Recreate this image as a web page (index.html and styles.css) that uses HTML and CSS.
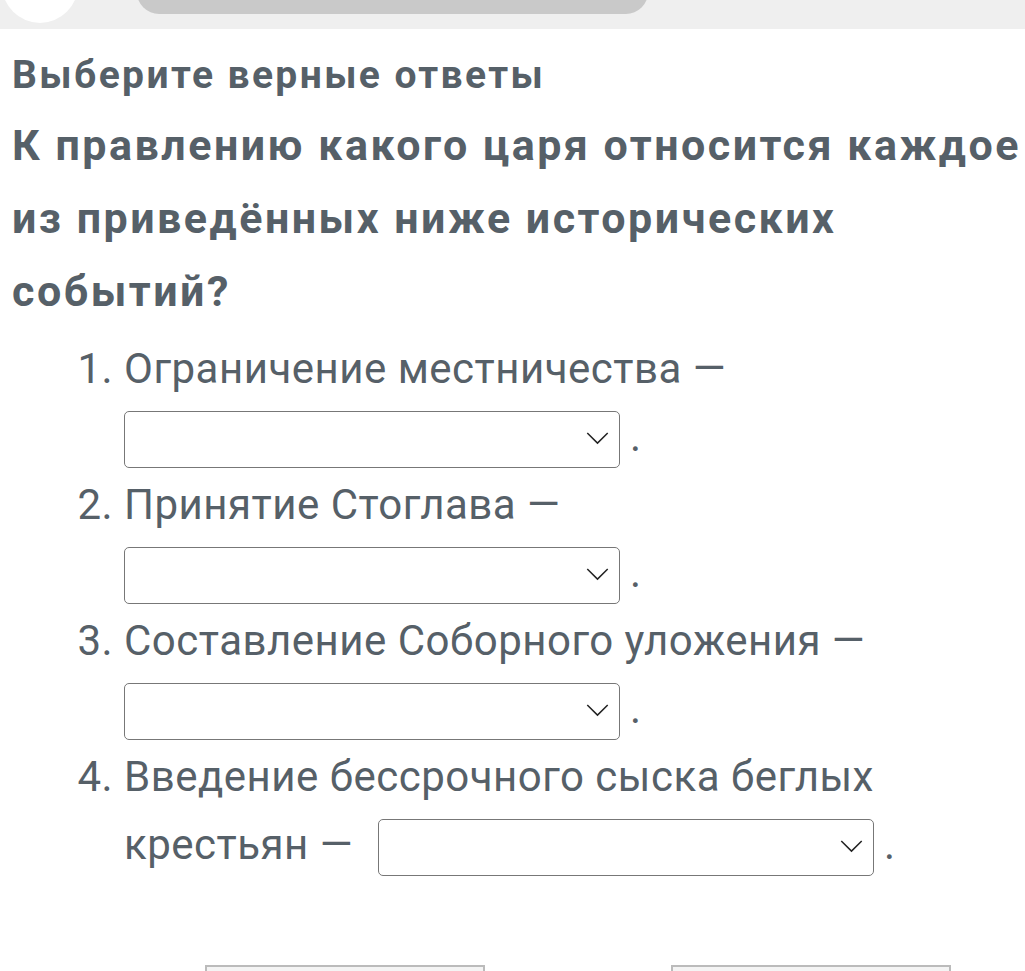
FILE: index.html
```html
<!DOCTYPE html>
<html lang="ru">
  <head>
    <meta charset="UTF-8" />
    <title>Выберите верные ответы</title>
    <link rel="stylesheet" href="styles.css">
  </head>

  <body>
    <!-- Верхняя панель -->
    <div class="topbar">
      <div class="avatar"></div>
      <div class="search"></div>
    </div>

    <div class="task">
      <h2 class="task-title">Выберите верные ответы</h2>
      <p class="question">К правлению какого царя относится каждое из приведённых ниже исторических событий?</p>

      <ol class="answers">
        <li>
          <span class="event">Ограничение местничества —</span>
          <span class="pick"><select></select><svg viewBox="0 0 24 14"><path d="M1 1 L12 12 L23 1" /></svg></span>.
        </li>
        <li>
          <span class="event">Принятие Стоглава —</span>
          <span class="pick"><select></select><svg viewBox="0 0 24 14"><path d="M1 1 L12 12 L23 1" /></svg></span>.
        </li>
        <li>
          <span class="event">Составление Соборного уложения —</span>
          <span class="pick"><select></select><svg viewBox="0 0 24 14"><path d="M1 1 L12 12 L23 1" /></svg></span>.
        </li>
        <li>
          <span class="event">Введение бессрочного сыска беглых крестьян —</span>
          <span class="pick"><select></select><svg viewBox="0 0 24 14"><path d="M1 1 L12 12 L23 1" /></svg></span>.
        </li>
      </ol>

      <!-- Кнопки внизу -->
      <div class="buttons">
        <button class="btn"></button>
        <button class="btn"></button>
      </div>
    </div>
  </body>
</html>
```

FILE: styles.css
```css
body {
  margin: 0;
  background-color: white;
  font-family: Roboto, "Noto Sans", sans-serif;
  color: #566068;
  overflow: hidden;
}

.topbar {
  display: flex;
  height: 29px;
  background-color: #efefef;
  overflow: hidden;
}

.avatar {
  width: 76px;
  height: 76px;
  margin-top: -53px;
  margin-left: 2px;
  border-radius: 50%;
  background-color: white;
}

.search {
  width: 511px;
  height: 44px;
  margin-top: -30px;
  margin-left: 59px;
  border-radius: 22px;
  background-color: #c9c9c9;
}

.task {
  padding-left: 12px;
}

.task-title {
  margin: 26px 0 0;
  font-size: 39px;
  font-weight: 700;
  line-height: 40px;
  letter-spacing: 2.4px;
}

.question {
  margin: 14px 0 0;
  font-size: 43px;
  font-weight: 700;
  line-height: 73px;
  letter-spacing: 2.5px;
}

.answers {
  margin: 7px 0 0;
  padding-left: 112px;
  font-size: 42px;
  line-height: 68px;
  letter-spacing: 0.5px;
}

.event {
  padding-right: 14px;
}

/* Выпадающий список */
.pick {
  position: relative;
  display: inline-block;
  vertical-align: middle;
  margin-right: 10px;
}

.pick select {
  display: block;
  width: 496px;
  height: 57px;
  border: 1.5px solid #777;
  border-radius: 5px;
  background-color: white;
  appearance: none;
}

.pick svg {
  position: absolute;
  right: 11px;
  top: 21px;
  width: 23px;
  height: 13px;
  fill: none;
  stroke: #222;
  stroke-width: 1.6;
}

.buttons {
  display: flex;
  gap: 186px;
  margin-top: 86px;
  padding-left: 193px;
}

.btn {
  width: 280px;
  height: 50px;
  border: 2px solid #bbb;
  background-color: #f4f4f4;
}
```
